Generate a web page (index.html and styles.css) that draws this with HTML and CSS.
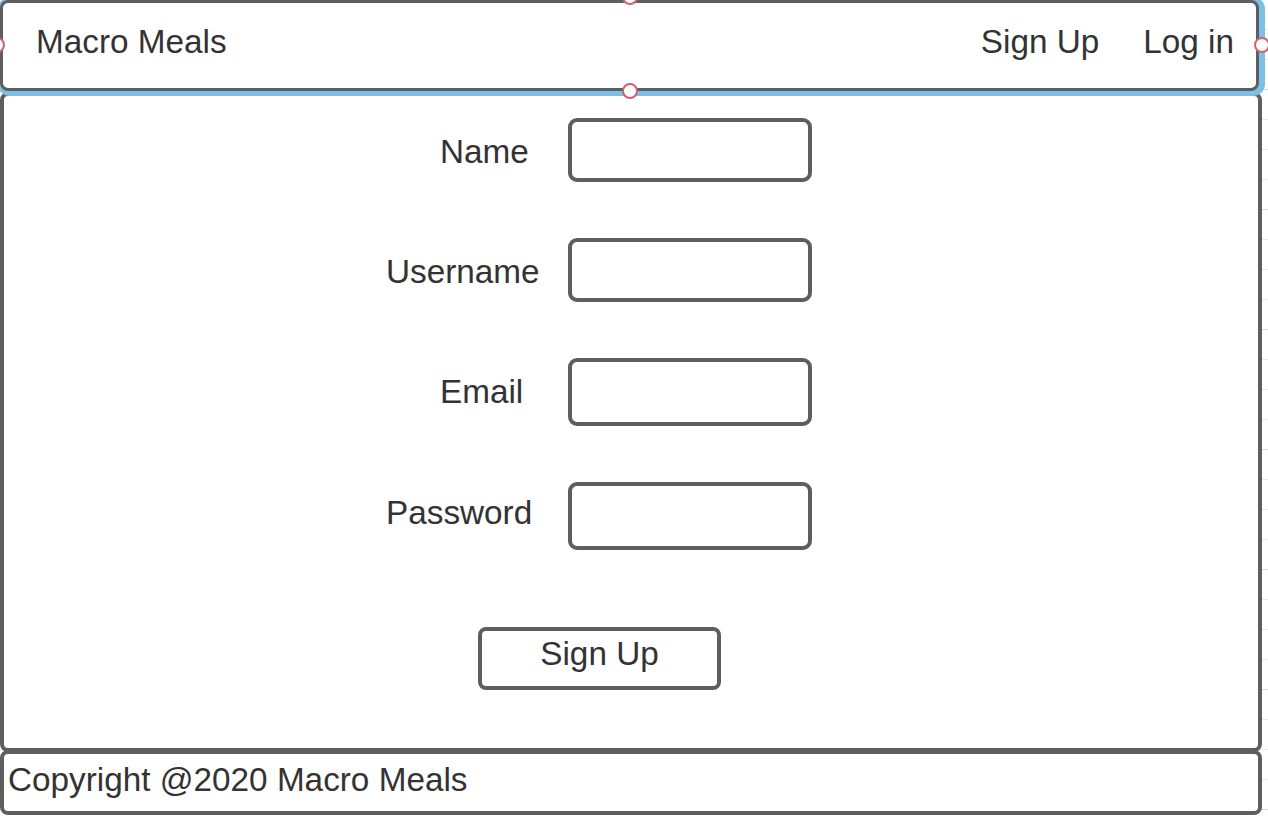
FILE: index.html
```html
<!DOCTYPE html>
<html>
<head>
  <meta charset="UTF-8">
  <link rel="stylesheet" href="styles.css">
</head>
<body>
  <div class="page">
    <header class="top-bar">
      <div class="brand">Macro Meals</div>
      <nav class="top-nav">
        <a href="#">Sign Up</a>
        <a href="#">Log in</a>
      </nav>
      <!-- selection handles -->
      <span class="handle handle-top"></span>
      <span class="handle handle-left"></span>
      <span class="handle handle-right"></span>
      <span class="handle handle-bottom"></span>
    </header>

    <main class="content">
      <form class="signup-form">
        <label class="field-label indent" for="nameInput">Name</label>
        <input type="text" id="nameInput" class="field-input">

        <label class="field-label" for="usernameInput">Username</label>
        <input type="text" id="usernameInput" class="field-input">

        <label class="field-label indent" for="emailInput">Email</label>
        <input type="email" id="emailInput" class="field-input tall">

        <label class="field-label password-label" for="passwordInput">Password</label>
        <input type="password" id="passwordInput" class="field-input tall">
      </form>

      <button class="signup-btn" type="button">Sign Up</button>
    </main>

    <footer class="bottom-bar">Copyright @2020 Macro Meals</footer>
  </div>
</body>
</html>
```

FILE: styles.css
```css
body {
  margin: 0;
  font-family: "Liberation Sans", Arial, sans-serif;
  font-size: 33.3px;
  color: #333;
  background-color: #fff;
  /* canvas grid ticks */
  background-image:
    repeating-linear-gradient(to bottom, transparent 0, transparent 89px, #d6d6d6 89px, #d6d6d6 90px, transparent 90px, transparent 120px),
    repeating-linear-gradient(to bottom, transparent 0, transparent 29px, #e8e8e8 29px, #e8e8e8 30px);
}

.page {
  width: 1262px;
}

.top-bar {
  position: relative;
  z-index: 2;
  box-sizing: border-box;
  width: 1259px;
  height: 91px;
  display: flex;
  align-items: center;
  justify-content: space-between;
  padding: 0 22px 8px 33px;
  background: #fff;
  border: 3px solid #5e5e5e;
  border-radius: 8px;
  box-shadow: 2px 1px 0 4px #7dc0e5;
  line-height: 40px;
}

.top-nav {
  display: flex;
  gap: 44px;
}

.top-nav a {
  color: #333;
  text-decoration: none;
}

.handle {
  position: absolute;
  box-sizing: border-box;
  width: 16px;
  height: 16px;
  border: 2px solid #d4606f;
  border-radius: 50%;
  background: #fff;
}

.handle-top {
  top: -14px;
  left: 619px;
}

.handle-bottom {
  top: 80px;
  left: 619px;
}

.handle-left {
  top: 34px;
  left: -14px;
}

.handle-right {
  top: 34px;
  left: 1251px;
}

.content {
  position: relative;
  z-index: 1;
  box-sizing: border-box;
  height: 660px;
  margin-top: 1px;
  padding: 22px 0 0 382px;
  background: #fff;
  border: 4px solid #5e5e5e;
  border-radius: 8px;
}

.signup-form {
  display: grid;
  grid-template-columns: 182px 244px;
  row-gap: 56px;
}

.field-label {
  padding-top: 14px;
  line-height: 40px;
}

.field-label.indent {
  padding-left: 54px;
}

.password-label {
  margin-top: 1px;
  padding-top: 10px;
}

.field-input {
  box-sizing: border-box;
  width: 244px;
  height: 64px;
  margin: 0;
  border: 4px solid #5e5e5e;
  border-radius: 9px;
  background: #fff;
  font: inherit;
}

.field-input.tall {
  height: 68px;
}

.signup-btn {
  box-sizing: border-box;
  display: block;
  width: 243px;
  height: 63px;
  margin: 77px 0 0 92px;
  padding: 0 0 10px;
  border: 4px solid #5e5e5e;
  border-radius: 8px;
  background: #fff;
  color: #333;
  font-family: inherit;
  font-size: 33.3px;
  line-height: 40px;
}

.bottom-bar {
  position: relative;
  z-index: 0;
  box-sizing: border-box;
  height: 65px;
  margin-top: -2px;
  padding: 6px 0 0 4px;
  background: #fff;
  border: 4px solid #5e5e5e;
  border-radius: 8px;
  line-height: 40px;
}
```
